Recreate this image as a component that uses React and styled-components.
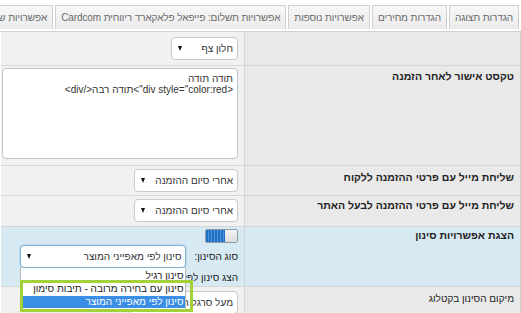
import React from 'react'
import styled, { createGlobalStyle } from 'styled-components'

const GlobalStyle = createGlobalStyle`
  body {
    margin: 0;
    background: #fff;
    font-family: "Liberation Sans", Arial, sans-serif;
    font-size: 10px;
    color: #333;
  }
`

const Page = styled.div`
  width: 521px;
  height: 313px;
  overflow: hidden;
  direction: rtl;
  padding-top: 5px;
  box-sizing: border-box;
`

const Tabs = styled.div`
  display: flex;
  gap: 2px;
  padding-right: 2px;
  height: 24px;
  margin-bottom: 2px;
  white-space: nowrap;
`

const Tab = styled.div`
  flex: none;
  display: flex;
  align-items: center;
  padding: 0 5px;
  background: linear-gradient(#f7f7f7, #ebebeb);
  border: 1px solid #cfcfcf;
  border-bottom: none;
  color: #6a6a6a;
  font-size: 10px;
  letter-spacing: -0.1px;
`

const Panel = styled.div`
  width: 520px;
  border: 1px solid #cfcfcf;
  border-left: none;
  display: grid;
  grid-template-columns: 276px 243px;
`

const Label = styled.div`
  background: ${p => (p.$blue ? '#d7e9f3' : '#e9e9e9')};
  border-bottom: 1px solid #d6d6d6;
  border-left: 1px solid #d6d6d6;
  padding: ${p => p.$pt || 4}px 6px 0 0;
  font-weight: ${p => (p.$plain ? 'normal' : 'bold')};
  font-size: ${p => (p.$plain ? 10 : 10.5)}px;
  color: #222;
  height: ${p => p.$h}px;
  box-sizing: border-box;
`

const Value = styled.div`
  background: ${p => (p.$blue ? '#d7e9f3' : '#f1f1f1')};
  border-bottom: 1px solid #d6d6d6;
  padding: ${p => p.$pt || 4}px 6px 0 0;
  height: ${p => p.$h}px;
  box-sizing: border-box;
  display: flex;
  flex-direction: column;
  align-items: flex-start;
  position: relative;
`

const Select = styled.div`
  width: ${p => p.$w}px;
  height: 23px;
  box-sizing: border-box;
  background: #fff;
  border: 1px solid ${p => (p.$focus ? '#7fb2d8' : '#c9c9c9')};
  box-shadow: ${p => (p.$focus ? '0 0 2px rgba(80,150,210,.5)' : 'none')};
  border-radius: 4px;
  display: flex;
  align-items: center;
  justify-content: space-between;
  padding: 0 4px 0 6px;
  color: #333;
  white-space: nowrap;
  overflow: hidden;
`

const Arrow = styled.span`
  width: 0;
  height: 0;
  border-left: 2.5px solid transparent;
  border-right: 2.5px solid transparent;
  border-top: 5px solid #111;
  flex: none;
  margin-right: 6px;
`

const TextArea = styled.textarea`
  width: 236px;
  height: 91px;
  box-sizing: border-box;
  border: 1px solid #bfc7cc;
  border-radius: 4px;
  resize: none;
  padding: 4px 4px;
  font-family: "Liberation Sans", Arial, sans-serif;
  font-size: 10px;
  line-height: 11px;
  color: #333;
  background: #fff;
  direction: rtl;
`

const Toggle = styled.div`
  width: 33px;
  height: 14px;
  border: 1px solid #8a9aa8;
  border-radius: 2px;
  box-sizing: border-box;
  display: flex;
  overflow: hidden;
`

const ToggleOn = styled.div`
  width: 19px;
  background: repeating-linear-gradient(90deg, #1f6fc4 0 2px, #4f95dc 2px 3px);
`

const ToggleOff = styled.div`
  flex: 1;
  background: linear-gradient(#f4f4f4, #dcdcdc);
`

const FieldRow = styled.div`
  display: flex;
  align-items: center;
  gap: 8px;
  margin-top: ${p => p.$mt || 0}px;
  white-space: nowrap;
  color: #222;
`

const DropWrap = styled.div`
  position: relative;
`

const DropList = styled.div`
  position: absolute;
  top: 100%;
  left: 0;
  width: 166px;
  box-sizing: border-box;
  background: #fff;
  border: 1px solid #b8b8b8;
  border-top: none;
  z-index: 5;
  padding: 2px 0 3px;
`

const Option = styled.div`
  height: ${p => p.$h || 12}px;
  line-height: ${p => p.$h || 12}px;
  padding: 0 2px;
  white-space: nowrap;
  color: ${p => (p.$selected ? '#fff' : '#222')};
  background: ${p => (p.$selected ? '#3a8ee6' : '#fff')};
  font-size: 10px;
`

const Highlight = styled.div`
  position: absolute;
  left: -1px;
  right: -8px;
  top: 12px;
  height: 32px;
  border: 3px solid #a3d13a;
  box-sizing: border-box;
  pointer-events: none;
`

const tabs = [
  'הגדרות תצוגה',
  'הגדרות מחירים',
  'אפשרויות נוספות',
  'אפשרויות תשלום: פייפאל פלאקארד ריווחית Cardcom',
  'אפשרויות שיתוף',
]

export default function App() {
  return (
    <>
      <GlobalStyle />
      <Page>
        <Tabs>
          {tabs.map(t => (
            <Tab key={t}>{t}</Tab>
          ))}
        </Tabs>
        <Panel>
          <Label $h={34} />
          <Value $h={34} $pt={5}>
            <Select $w={67}>
              <span>חלון צף</span>
              <Arrow />
            </Select>
          </Value>

          <Label $h={100} $pt={4}>טקסט אישור לאחר הזמנה</Label>
          <Value $h={100} $pt={2}>
            <TextArea
              readOnly
              defaultValue={'תודה תודה\n<div style="color:red">תודה רבה</div>'}
            />
          </Value>

          <Label $h={30} $pt={5}>שליחת מייל עם פרטי ההזמנה ללקוח</Label>
          <Value $h={30} $pt={3}>
            <Select $w={104}>
              <span>אחרי סיום ההזמנה</span>
              <Arrow />
            </Select>
          </Value>

          <Label $h={31} $pt={3}>שליחת מייל עם פרטי ההזמנה לבעל האתר</Label>
          <Value $h={31} $pt={3}>
            <Select $w={104}>
              <span>אחרי סיום ההזמנה</span>
              <Arrow />
            </Select>
          </Value>

          <Label $h={60} $pt={2} $blue>הצגת אפשרויות סינון</Label>
          <Value $h={60} $pt={2} $blue>
            <Toggle>
              <ToggleOff />
              <ToggleOn />
            </Toggle>
            <FieldRow $mt={2}>
              <span>סוג הסינון:</span>
              <DropWrap>
                <Select $w={166} $focus>
                  <span>סינון לפי מאפייני המוצר</span>
                  <Arrow />
                </Select>
                <DropList>
                  <Option $h={12}>סינון רגיל</Option>
                  <Option $h={14}>סינון עם בחירה מרובה - תיבות סימון</Option>
                  <Option $h={12} $selected>סינון לפי מאפייני המוצר</Option>
                  <Highlight />
                </DropList>
              </DropWrap>
            </FieldRow>
            <FieldRow $mt={4}>
              <span>הצג סינון לפי</span>
            </FieldRow>
          </Value>

          <Label $h={30} $pt={6} $plain>מיקום הסינון בקטלוג</Label>
          <Value $h={30} $pt={4}>
            <Select $w={110}>
              <span>מעל סרגל המוצרים</span>
              <Arrow />
            </Select>
          </Value>
        </Panel>
      </Page>
    </>
  )
}
